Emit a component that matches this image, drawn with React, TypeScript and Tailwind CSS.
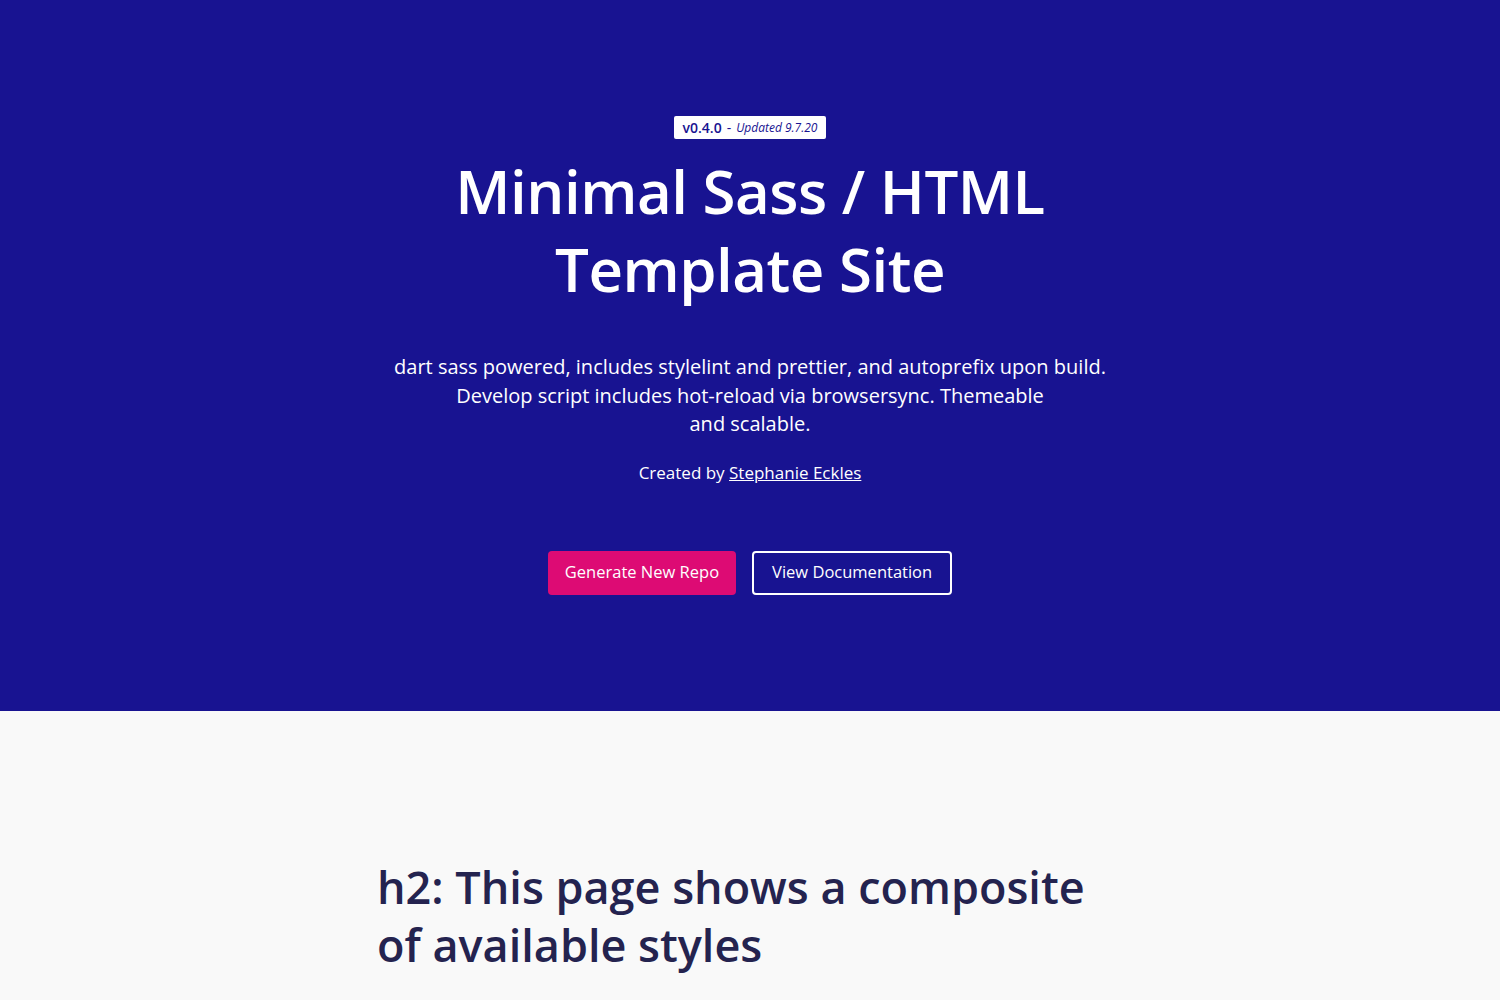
import React from "react";

export default function App() {
  const font = { fontFamily: '"Open Sans", "Noto Sans", sans-serif' };
  return (
    <div className="min-h-screen bg-[#f9f9f9]" style={font}>
      <header className="bg-[#181391] h-[711px] flex flex-col items-center pt-[116px] text-white">
        <div className="bg-white text-[#181391] rounded-[2px] px-[9px] h-[23px] flex items-center text-[14px] leading-none">
          <span className="font-semibold">v0.4.0</span>
          <span className="mx-[5px]">-</span>
          <em className="text-[12px]">Updated 9.7.20</em>
        </div>
        <h1 className="mt-[13px] text-center text-[60px] leading-[78px] font-semibold tracking-[-0.5px] max-w-[620px]">
          Minimal Sass / HTML Template Site
        </h1>
        <p className="mt-[45px] text-center text-[20px] leading-[28.5px]">
          dart sass powered, includes stylelint and prettier, and autoprefix upon build.
          <br />
          Develop script includes hot-reload via browsersync. Themeable
          <br />
          and scalable.
        </p>
        <p className="mt-[22px] text-[17px] leading-[24px]">
          Created by <a href="#" className="underline">Stephanie Eckles</a>
        </p>
        <div className="mt-[66px] flex gap-[16px]">
          <a href="#" className="bg-[#dd0b74] rounded-[4px] h-[44px] px-[17px] flex items-center text-[16.5px]">Generate New Repo</a>
          <a href="#" className="border-2 border-white rounded-[4px] h-[44px] px-[18px] flex items-center text-[16.5px]">View Documentation</a>
        </div>
      </header>
      <main className="max-w-[746px] mx-auto pt-[147px]">
        <h2 className="text-[#24234f] text-[45px] leading-[58px] font-semibold">
          h2: This page shows a composite of available styles
        </h2>
      </main>
    </div>
  );
}
